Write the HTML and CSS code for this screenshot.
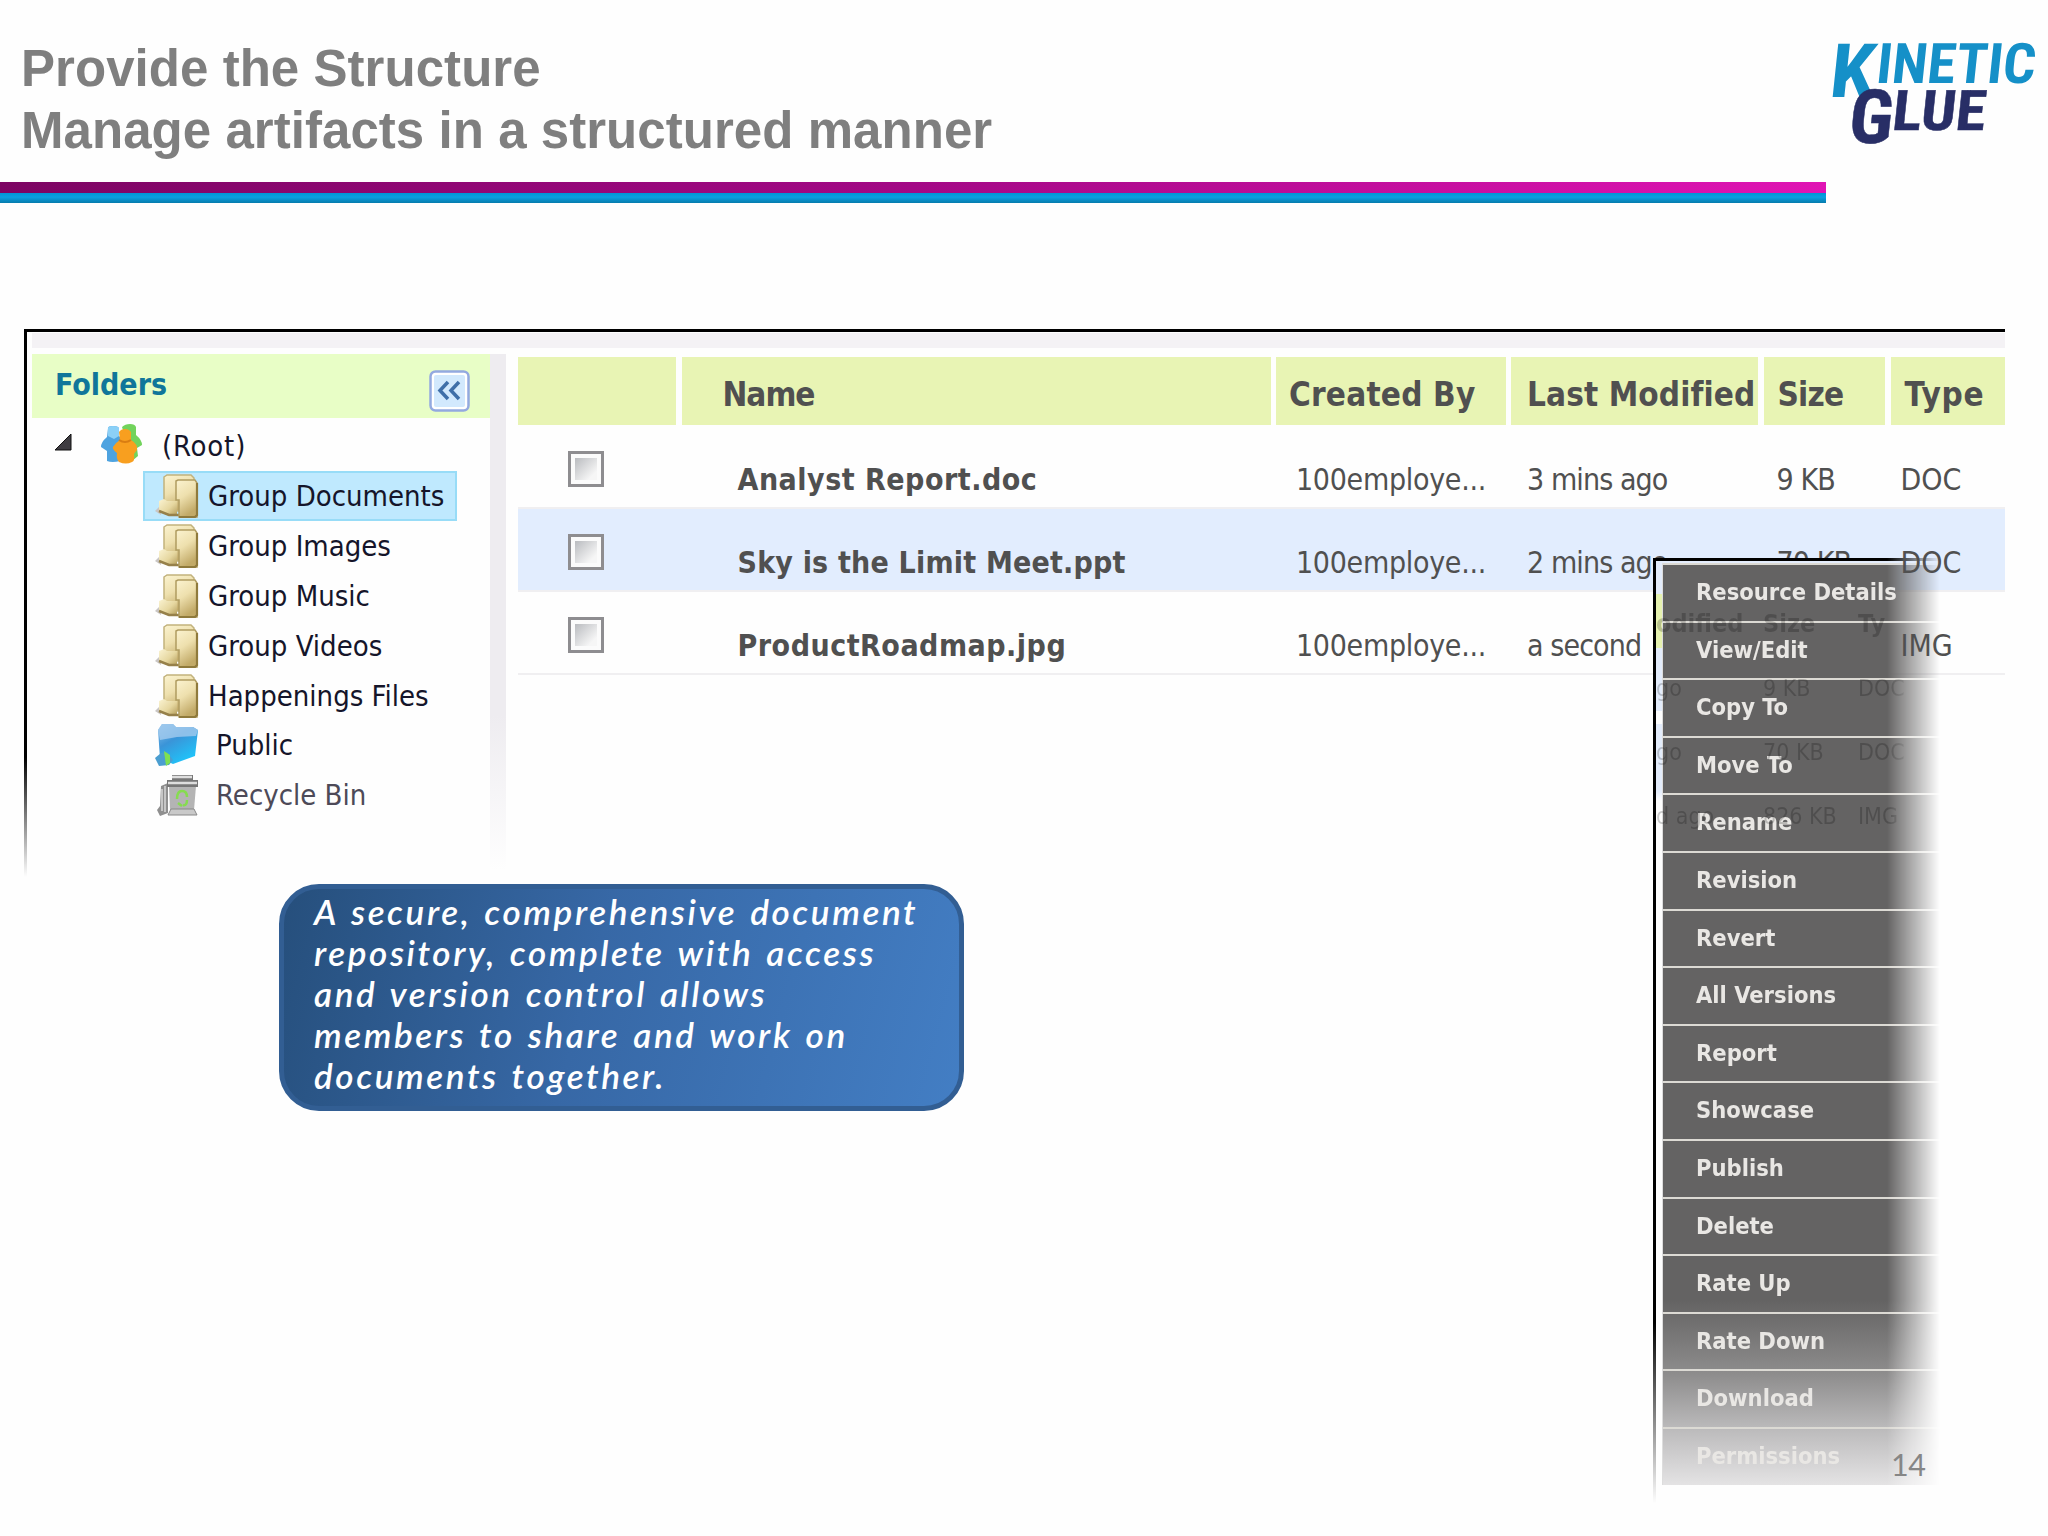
FILE: index.html
```html
<!DOCTYPE html>
<html lang="en">
<head>
<meta charset="utf-8">
<title>Provide the Structure</title>
<link rel="stylesheet" href="styles.css">
</head>
<body>
<svg class="defs" width="0" height="0" aria-hidden="true">
  <defs>
    <linearGradient id="tan" x1="0" y1="0" x2="1" y2="1"><stop offset="0" stop-color="#fbf4d3"/><stop offset=".55" stop-color="#e6d7a0"/><stop offset="1" stop-color="#b39b58"/></linearGradient>
    <linearGradient id="pane" x1="0" y1="0" x2=".4" y2="1"><stop offset="0" stop-color="#fbf3d0"/><stop offset=".5" stop-color="#eee0ae"/><stop offset="1" stop-color="#c2aa68"/></linearGradient>
    <linearGradient id="sky" x1="0" y1="0" x2=".6" y2="1"><stop offset="0" stop-color="#8cc0ea"/><stop offset=".45" stop-color="#3a94d8"/><stop offset="1" stop-color="#1fc4fa"/></linearGradient>
    <symbol id="folder" viewBox="0 0 44 46">
      <path d="M0 38l6-6v10z" fill="#c9c6c4"/>
      <path d="M9 4l3-2h24l3 3v33H9z" fill="url(#pane)" stroke="#c2b27c" stroke-width="1.500"/>
      <path d="M4 28l5-2 3 2h10v15h-8L4 38z" fill="url(#tan)"/>
      <path d="M4 38l10 4h10" fill="none" stroke="#96804a" stroke-width="2.500"/>
      <path d="M21 8l2-1h17l2 3v34H24V27h-3z" fill="url(#pane)" stroke="#b09c60" stroke-width="1.500"/>
      <path d="M24 44h16l2-2V10" fill="none" stroke="#8f7a3c" stroke-width="2.200"/>
    </symbol>
    <symbol id="public" viewBox="0 0 44 46">
      <path d="M3 8l4-6h11l3 3h17l5 3-3 26-22 8-13-6z" fill="url(#sky)"/>
      <path d="M3 8l4-6h11l3 3h17l5 3-2 6-19 1-17 3z" fill="#a3caee" opacity=".8"/>
      <path d="M0 36l6-5 6-1 6 8-4 5-10 1z" fill="#4b9ed0"/>
      <path d="M9 29l6 4v8l-4 3z" fill="#7ee052"/>
    </symbol>
    <symbol id="bin" viewBox="0 0 44 46">
      <path d="M6 14l7-3v30l-8 3-3-6 3-4z" fill="#8f8f8f"/>
      <path d="M7 17v22M10 14v26" stroke="#d9d9d9" stroke-width="1.500"/>
      <path d="M14 14h27l-2 24H15z" fill="#b4b4b4"/>
      <path d="M12 8h5V3h21v5h5v7H12z" fill="#777"/>
      <path d="M17 5h20M13 11h29" stroke="#dedede" stroke-width="2.500"/>
      <path d="M16 37h23l3 6H13z" fill="#c9c9c9" stroke="#888"/>
      <path d="M22 27q0-8 5-8t5 6M23 31l4 3M32 28q0 6-4 5" fill="none" stroke="#86dc50" stroke-width="2.500"/>
    </symbol>
  </defs>
</svg>

<header class="head">
  <h1 class="title">Provide the Structure<br>Manage artifacts in a structured manner</h1>
  <svg class="logo" viewBox="1826 30 222 130" role="img" aria-label="Kinetic Glue">
    <g class="logo-top">
      <text class="big" transform="translate(1828 97) skewX(-6)" textLength="45" lengthAdjust="spacingAndGlyphs">K</text>
      <text class="small" transform="translate(1875 83) skewX(-6)" textLength="159" lengthAdjust="spacingAndGlyphs">INETIC</text>
    </g>
    <g class="logo-bottom">
      <text class="big" transform="translate(1847 143) skewX(-6)" textLength="44" lengthAdjust="spacingAndGlyphs">G</text>
      <text class="small" transform="translate(1891 129.500) skewX(-6)" textLength="93" lengthAdjust="spacingAndGlyphs">LUE</text>
    </g>
  </svg>
</header>
<div class="bars"></div>

<main class="panel">
  <div class="strip"></div>
  <div class="panel-body">
    <nav class="sidebar">
      <div class="side-head"><span>Folders</span>
        <svg class="collapse" viewBox="0 0 41 42"><rect x="1.500" y="1.500" width="38" height="39" rx="5" fill="#fff" stroke="#93a9e0" stroke-width="2.500"/><rect x="5" y="5" width="31" height="32" rx="2" fill="#d2e9fd"/><path d="M19 12l-8 8.500 8 8.500M30 12l-8 8.500 8 8.500" fill="none" stroke="#3f6fa8" stroke-width="3.500"/></svg>
      </div>
      <div class="root">
        <svg class="arrow" viewBox="0 0 17 17"><path d="M16 0v16H0z" fill="#3f3d42" stroke="#111"/></svg>
        <svg class="people" viewBox="0 0 42 40">
          <path d="M8 4q0-2 5-2t6 2v8l5 5-4 20q-8 2-13 0V27l-6-4q0-5 6-10z" fill="#4ea3e0"/><path d="M8 4q0-2 5-2t6 2v8l-5 3-6-3z" fill="#8bd0f7"/>
          <path d="M22 3q3-3 8-3t6 3v8q6 5 6 10l-5 3 1 8-6 5z" fill="#72d35c"/>
          <path d="M19 8q2-3 6-3t6 3v8q7 4 6 10l-3 4q1 7-2 8-6 3-13 0-3-3-2-9-5-4-4-6 2-4 7-7z" fill="#f89f1f"/><path d="M19 16q6 4 12 0" stroke="#d97d12" stroke-width="2" fill="none"/></svg>
        <span>(Root)</span>
      </div>
      <ul class="tree">
        <li class="on"><svg><use href="#folder"/></svg><span>Group Documents</span></li>
        <li><svg><use href="#folder"/></svg><span>Group Images</span></li>
        <li><svg><use href="#folder"/></svg><span>Group Music</span></li>
        <li><svg><use href="#folder"/></svg><span>Group Videos</span></li>
        <li><svg><use href="#folder"/></svg><span>Happenings Files</span></li>
        <li class="sys"><svg><use href="#public"/></svg><span>Public</span></li>
        <li class="sys dim"><svg><use href="#bin"/></svg><span>Recycle Bin</span></li>
      </ul>
    </nav>
    <div class="splitter"></div>
    <section class="files">
      <div class="row thead"><div></div><div class="c-name">Name</div><div class="c-by">Created By</div><div class="c-mod">Last Modified</div><div class="c-size">Size</div><div class="c-type">Type</div></div>
      <div class="row"><div class="c-check"><i class="check"></i></div><div class="c-name">Analyst Report.doc</div><div class="c-by">100employe...</div><div class="c-mod">3 mins ago</div><div class="c-size">9 KB</div><div class="c-type">DOC</div></div>
      <div class="row hot"><div class="c-check"><i class="check"></i></div><div class="c-name long">Sky is the Limit Meet.ppt</div><div class="c-by">100employe...</div><div class="c-mod">2 mins ago</div><div class="c-size">70 KB</div><div class="c-type">DOC</div></div>
      <div class="row"><div class="c-check"><i class="check"></i></div><div class="c-name">ProductRoadmap.jpg</div><div class="c-by">100employe...</div><div class="c-mod">a second</div><div class="c-size"></div><div class="c-type">IMG</div></div>
    </section>
  </div>
</main>

<aside class="callout">A secure, comprehensive document<br>repository, complete with access<br>and version control allows<br>members to share and work on<br>documents together.</aside>

<div class="menu">
  <ul class="items">
    <li>Resource Details</li>
    <li>View/Edit</li>
    <li>Copy To</li>
    <li>Move To</li>
    <li>Rename</li>
    <li>Revision</li>
    <li>Revert</li>
    <li>All Versions</li>
    <li>Report</li>
    <li>Showcase</li>
    <li>Publish</li>
    <li>Delete</li>
    <li>Rate Up</li>
    <li>Rate Down</li>
    <li>Download</li>
    <li>Permissions</li>
  </ul>
  <div class="ghost">
    <div class="g g-head"><span>odified</span><span>Size</span><span>Ty</span></div>
    <div class="g"><span>go</span><span>9 KB</span><span>DOC</span></div>
    <div class="g"><span>go</span><span>70 KB</span><span>DOC</span></div>
    <div class="g"><span>d ago</span><span>826 KB</span><span>IMG</span></div>
  </div>
</div>
<div class="page-no">14</div>
</body>
</html>
```
FILE: styles.css
```css
* { box-sizing: border-box; }
body { margin: 0; width: 2048px; height: 1536px; position: relative; overflow: hidden; background: #fefefe; font-family: "DejaVu Sans Condensed", "DejaVu Sans", sans-serif; font-stretch: condensed; }
ul { list-style: none; margin: 0; padding: 0; }
svg { display: block; overflow: visible; }
.defs { position: absolute; }

.head { height: 182px; padding: 30px 0 0 21px; display: flex; justify-content: space-between; }
.title { margin: 8px 0 0; font: bold 51px/61.5px "Liberation Sans", Arial, sans-serif; letter-spacing: 0.05px; color: #7f7f7f; white-space: nowrap; }
.logo { width: 222px; height: 130px; font-family: Roboto, sans-serif; font-weight: 700; }
.logo-top { fill: #1590c8; }
.logo-bottom { fill: #282e66; stroke: #282e66; stroke-width: 0.5px; }
.logo .big { font-size: 75px; }
.logo .small { font-size: 56px; }
.bars { width: 1826px; height: 21px; background: linear-gradient(#0095d6, #0a9fe0 40%, #0678a8) 0 10.5px / 100% 10.5px no-repeat, linear-gradient(90deg, #7d0463, #a30886 50%, #e014b4); }

.panel { margin: 126px 0 0 24px; width: 1981px; height: 548px; padding: 1px 0 0 8px; border-top: 3px solid #000; background: linear-gradient(#000 78%, transparent) 0 0 / 3px 100% no-repeat; }
.strip { height: 15px; background: #f4f2f5; }
.panel-body { display: flex; margin-top: 6px; }
.sidebar { width: 458px; font-size: 29px; color: #15152a; }
.side-head { height: 64px; padding: 0 20px 0 23px; display: flex; justify-content: space-between; background: #e8fec6; color: #10769a; font-weight: 700; font-size: 30px; line-height: 62px; }
.collapse { width: 41px; height: 42px; margin-top: 16px; }
.root { height: 53px; display: flex; line-height: 57px; padding-left: 23px; letter-spacing: 0.8px; }
.arrow { width: 17px; height: 17px; margin-top: 16px; }
.people { width: 42px; height: 40px; margin: 6px 20px 0 28px; }
.tree li { width: 314px; height: 49.9px; margin-left: 111px; padding-left: 12px; display: flex; line-height: 50px; white-space: nowrap; }
.tree svg { width: 44px; height: 46px; margin: 2px 9px 0 0; flex: none; }
.tree .on { background: #bfe9fe; box-shadow: inset 0 0 0 2px #98dcf7; }
.tree .sys svg { margin-right: 17px; }
.tree .dim { color: #4d4a58; }
.splitter { width: 16px; height: 516px; margin-right: 12px; background: linear-gradient(#eeecf0 70%, transparent); }

.files { width: 1487px; margin-top: 3px; color: #505050; font-size: 30px; }
.row { display: grid; grid-template-columns: 158px 589px 229.5px 247px 121.5px 114px; column-gap: 5.5px; height: 83px; line-height: 83px; padding-top: 12px; border-bottom: 2px solid #f0eff1; white-space: nowrap; letter-spacing: -0.9px; }
.row > div { padding-left: 16px; }
.row .c-name { padding-left: 56px; font-weight: 700; letter-spacing: 0.5px; }
.row .c-name.long { letter-spacing: 0.2px; }
.row .c-by { padding-left: 20px; letter-spacing: -0.3px; }
.row .c-size { padding-left: 13px; }
.row .c-type { padding-left: 10px; position: relative; z-index: 2; letter-spacing: 0; }
.row .c-check { padding: 13px 0 0 50px; }
.check { display: block; width: 36px; height: 36px; padding: 4px; border: 3px solid #8e8d90; background: linear-gradient(135deg, #b9bbbf, #f6f6f6 80%) content-box, #fbfbfb; }
.hot { background: #e2edfe; }
.row.thead { height: 69px; padding: 0; line-height: 66px; border: 0; font-size: 33px; font-weight: 700; letter-spacing: 0.1px; }
.row.thead > div { height: 68px; padding-top: 5px; background: #e8f4b4; }
.row.thead .c-name { padding-left: 41px; letter-spacing: -1px; }
.row.thead .c-by { padding-left: 13px; letter-spacing: 0.2px; }
.row.thead .c-size { padding-left: 14px; letter-spacing: -0.8px; }
.row.thead .c-type { padding-left: 14px; letter-spacing: 0.7px; }

.callout { margin: 7px 0 0 279px; width: 685px; height: 227px; padding: 2px 0 0 30px; border: 5px solid #325e93; border-radius: 40px; background: linear-gradient(105deg, #264f7c, #3768a6 45%, #437ec4); color: #fff; font: italic 600 35px/40.9px Lato, sans-serif; letter-spacing: 2.6px; word-spacing: 2.5px; white-space: nowrap; }

.menu { position: absolute; z-index: 1; left: 1653px; top: 558px; width: 290px; height: 955px; padding: 2px 0 0 9px; border-top: 3px solid #000;
  background: linear-gradient(#000 80%, transparent 99%) 0 0 / 3px 100% no-repeat, linear-gradient(#e3ecfb 33px, #e6f2b0 33px 87px, #e3ecfb 87px 150px, #fefefe 150px 163px, #e3ecfb 163px 230px, #fefefe 240px);
  -webkit-mask: linear-gradient(90deg, #000 234px, transparent 287px); mask: linear-gradient(90deg, #000 234px, transparent 287px); }
.items { position: relative; border-left: 1px solid #ddd; background: linear-gradient(#646363 0 80%, #8e8d8d 88%, #bcbbbc 94%, #e4e3e4); }
.items li { height: 57.6px; padding-left: 33px; border-top: 2px solid #dcdad4; color: #e9e7e4; font-weight: 700; font-size: 23.5px; line-height: 54px; white-space: nowrap; }
.ghost { position: absolute; left: 3px; top: 39px; width: 260px; color: #000; opacity: .2; font-size: 23px; }
.g { display: grid; grid-template-columns: 107px 95px 50px; height: 64px; line-height: 48px; }
.g-head { font-weight: 700; font-size: 25px; }
.page-no { position: absolute; z-index: 2; left: 1891px; top: 1446px; font: 30.5px/36px Lato, sans-serif; letter-spacing: -0.5px; color: #868686; }
```
